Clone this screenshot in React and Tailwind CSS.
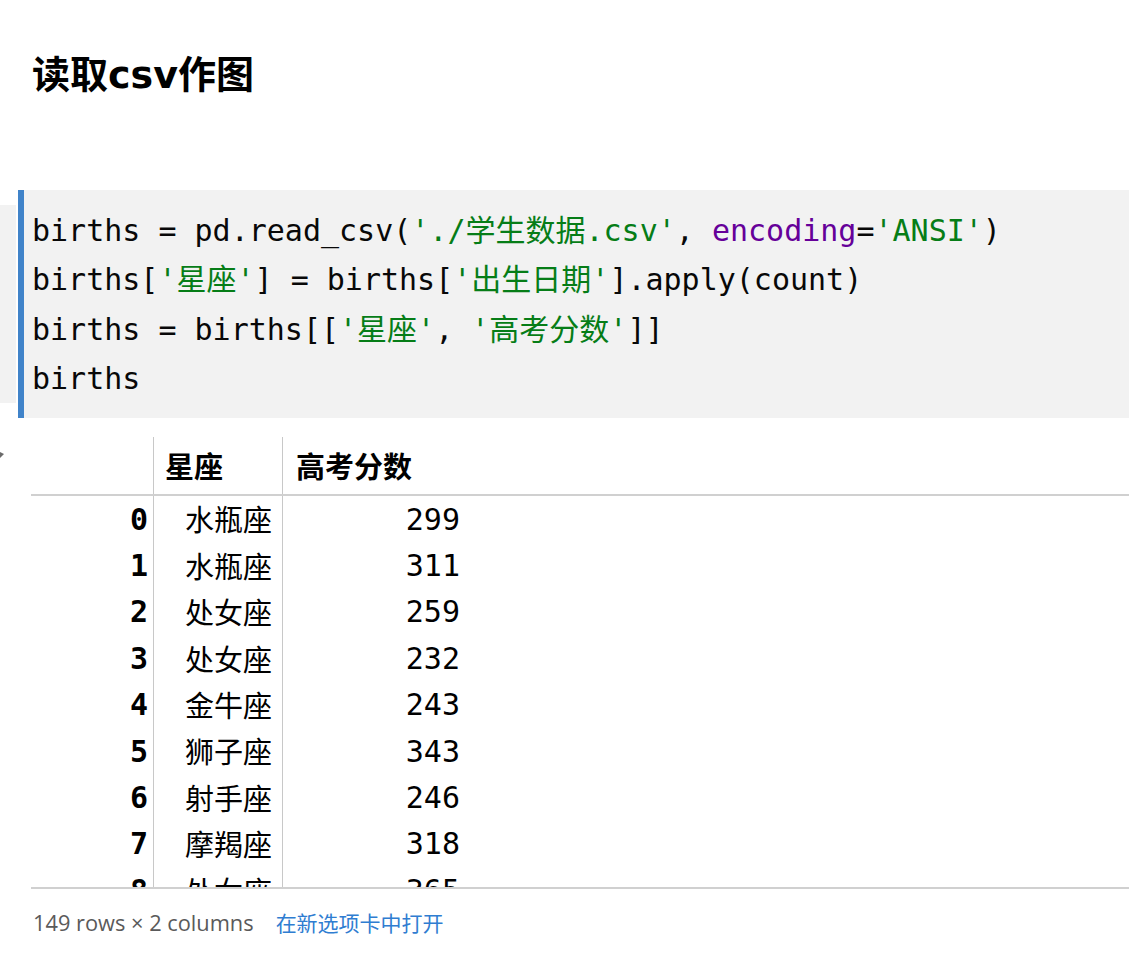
import React from "react";

const rows = [
  [0, "水瓶座", 299],
  [1, "水瓶座", 311],
  [2, "处女座", 259],
  [3, "处女座", 232],
  [4, "金牛座", 243],
  [5, "狮子座", 343],
  [6, "射手座", 246],
  [7, "摩羯座", 318],
  [8, "处女座", 365],
];

const mono = { fontFamily: '"DejaVu Sans Mono", "Noto Sans CJK SC", monospace' };
const cjk = { fontFamily: '"Noto Sans CJK SC", sans-serif' };

function S({ children }) {
  return <span className="text-[#067d17]">{children}</span>;
}

export default function App() {
  return (
    <div className="w-[1129px] h-[972px] overflow-hidden bg-white text-black">
      <h1
        className="ml-[32px] pt-[47px] h-[97px] leading-[49px] text-[38px] font-bold"
        style={cjk}
      >
        读取<span style={{ fontFamily: '"DejaVu Sans", sans-serif' }}>csv</span>作图
      </h1>

      <div className="flex mt-[93px] h-[228px]">
        <div className="w-[16px] my-[15px] bg-[#f2f2f2]" />
        <div className="w-[6px] ml-[2px] bg-[#4083c9]" />
        <div
          className="flex-1 bg-[#f2f2f2] pl-[8px] pt-[16px] pb-[14px] text-[30px] leading-[49.3px] text-[#080808] whitespace-pre"
          style={mono}
        >
          <div>
            births = pd.read_csv(<S>'./学生数据.csv'</S>, <span className="text-[#660099]">encoding</span>=<S>'ANSI'</S>)
          </div>
          <div>
            births[<S>'星座'</S>] = births[<S>'出生日期'</S>].apply(count)
          </div>
          <div>
            births = births[[<S>'星座'</S>, <S>'高考分数'</S>]]
          </div>
          <div>births</div>
        </div>
      </div>

      <div className="flex mt-[19px]">
        <div className="w-[31px] pt-[15px]">
          <svg width="4" height="6" viewBox="0 0 4 6">
            <path d="M0 0 L4 2 L0 6 Z" fill="#6b6b6b" />
          </svg>
        </div>
        <div className="flex-1">
          <div className="h-[450px] overflow-hidden">
            <div className="grid grid-cols-[123px_129px_188px_1fr] h-[59px] border-b-2 border-[#d0d0d0] text-[29px]" style={cjk}>
              <div className="border-r border-[#c8c8c8]" />
              <div className="border-r border-[#c8c8c8] pl-[11px] flex items-center font-bold">星座</div>
              <div className="pl-[13px] flex items-center font-bold">高考分数</div>
              <div />
            </div>
            {rows.map(([i, name, score]) => (
              <div key={i} className="grid grid-cols-[123px_129px_188px_1fr] h-[46.4px]">
                <div
                  className="border-r border-[#c8c8c8] pr-[5px] flex items-center justify-end text-[30px] font-bold"
                  style={mono}
                >
                  {i}
                </div>
                <div
                  className="border-r border-[#c8c8c8] pr-[10px] flex items-center justify-end text-[29px]"
                  style={cjk}
                >
                  {name}
                </div>
                <div className="pr-[11px] flex items-center justify-end text-[30px]" style={mono}>
                  {score}
                </div>
                <div />
              </div>
            ))}
          </div>
          <div className="h-[2px] bg-[#d0d0d0]" />
        </div>
      </div>

      <div
        className="flex items-center ml-[33px] mt-[19px] h-[30px] text-[21.8px]"
        style={{ fontFamily: '"Open Sans", "Noto Sans CJK SC", sans-serif' }}
      >
        <span className="text-[#5a5a5a]">149 rows × 2 columns</span>
        <span className="ml-[22px] text-[21px] text-[#2f7dd1]" style={cjk}>在新选项卡中打开</span>
      </div>
    </div>
  );
}
